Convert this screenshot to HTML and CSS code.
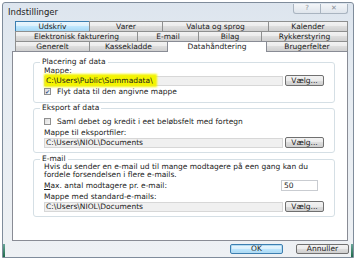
FILE: index.html
```html
<!DOCTYPE html>
<html lang="da">
<head>
    <meta charset="UTF-8">
    <title>Indstillinger</title>
    <link rel="stylesheet" href="styles.css">
</head>
<body>
    <div class="window">
        <div class="titlebar">
            <span class="title">Indstillinger</span>
            <div class="caption-buttons">
                <span class="cap-btn">?</span>
                <span class="cap-btn">&#x2715;</span>
            </div>
        </div>
        <div class="client">
            <div class="tabs">
                <div class="tab-row row-1">
                    <div class="tab hover">Udskriv</div>
                    <div class="tab">Varer</div>
                    <div class="tab">Valuta og sprog</div>
                    <div class="tab">Kalender</div>
                </div>
                <div class="tab-row row-2">
                    <div class="tab">Elektronisk fakturering</div>
                    <div class="tab">E-mail</div>
                    <div class="tab">Bilag</div>
                    <div class="tab">Rykkerstyring</div>
                </div>
                <div class="tab-row row-3">
                    <div class="tab">Generelt</div>
                    <div class="tab">Kassekladde</div>
                    <div class="tab selected">Datahåndtering</div>
                    <div class="tab">Brugerfelter</div>
                </div>
            </div>
            <div class="panel">
                <fieldset class="group group-placering">
                    <legend>Placering af data</legend>
                    <div class="label">Mappe:</div>
                    <div class="path-row">
                        <div class="path"><span class="marker">C:\Users\Public\Summadata\</span></div>
                        <button class="btn">Vælg...</button>
                    </div>
                    <div class="check">
                        <span class="box checked">&#x2714;</span>
                        <span>Flyt data til den angivne mappe</span>
                    </div>
                </fieldset>

                <fieldset class="group group-eksport">
                    <legend>Eksport af data</legend>
                    <div class="check">
                        <span class="box"></span>
                        <span>Saml debet og kredit i eet beløbsfelt med fortegn</span>
                    </div>
                    <div class="label">Mappe til eksportfiler:</div>
                    <div class="path-row">
                        <div class="path">C:\Users\NIOL\Documents</div>
                        <button class="btn">Vælg...</button>
                    </div>
                </fieldset>

                <fieldset class="group group-email">
                    <legend>E-mail</legend>
                    <div class="text">Hvis du sender en e-mail ud til mange modtagere på een gang kan du</div>
                    <div class="text">fordele forsendelsen i flere e-mails.</div>
                    <div class="max-row">
                        <span><u>M</u>ax. antal modtagere pr. e-mail:</span>
                        <div class="number">50</div>
                    </div>
                    <div class="label">Mappe med standard-e-mails:</div>
                    <div class="path-row">
                        <div class="path">C:\Users\NIOL\Documents</div>
                        <button class="btn">Vælg...</button>
                    </div>
                </fieldset>
            </div>
            <div class="footer">
                <button class="btn default">OK</button>
                <button class="btn">Annuller</button>
            </div>
        </div>
    </div>
</body>
</html>
```

FILE: styles.css
```css
body {
    margin: 0;
    background: #ffffff;
    font-family: 'DejaVu Sans', sans-serif;
    font-size: 7.5px;
    color: #1a1a1a;
}
.window {
    position: relative;
    box-sizing: border-box;
    width: 352px;
    height: 256px;
    margin: 2px 0 0 2px;
    border: 1px solid #7f8c9b;
    border-radius: 3px 3px 0 0;
    background: linear-gradient(180deg, #dde5ee 0%, #e6ecf2 30%, #eef1f4 100%);
    display: flex;
    flex-direction: column;
}
/* aero frame glint at the bottom corners */
.window::before,
.window::after {
    content: '';
    position: absolute;
    bottom: 0;
    width: 2px;
    height: 13px;
    background: linear-gradient(180deg, #6aa89a, #1f6b4a);
}
.window::before { left: 0; }
.window::after { right: 0; }

.titlebar {
    height: 18px;
    display: flex;
    align-items: flex-start;
    justify-content: space-between;
    padding: 0 5px 0 5px;
}
.title {
    font-family: 'DejaVu Sans', sans-serif;
    font-size: 8.5px;
    color: #222;
    margin-top: 4px;
}
.caption-buttons {
    display: flex;
    margin-top: 1px;
}
.cap-btn {
    width: 26px;
    height: 9px;
    border: 1px solid #a9b4c0;
    border-top: none;
    background: linear-gradient(180deg, #f3f5f8, #dfe5ec);
    color: #8a8f96;
    font-size: 7px;
    line-height: 9px;
    text-align: center;
}
.cap-btn + .cap-btn {
    border-left: none;
    border-radius: 0 0 3px 0;
}
.cap-btn:first-child {
    border-radius: 0 0 0 3px;
}

.client {
    flex: 1;
    display: flex;
    flex-direction: column;
    padding: 0 5px 0 9px;
}

/* tabs */
.tabs {
    margin-left: 3px;
}
.tab-row {
    display: grid;
    height: 10px;
}
.row-1 { grid-template-columns: 74px 73px 106px 80px; }
.row-2 { grid-template-columns: 122px 61px 63px 87px; }
.row-3 { grid-template-columns: 74px 78px 99px 82px; }
.tab {
    box-sizing: border-box;
    border: 1px solid #8e8f8f;
    border-bottom: none;
    margin-right: -1px;
    background: linear-gradient(180deg, #f2f2f2 0%, #ebebeb 50%, #dddddd 50%, #cfcfcf 100%);
    text-align: center;
    line-height: 9px;
    white-space: nowrap;
}
.tab-row > .tab:last-child { margin-right: 0; }
.tab.hover {
    border-color: #3c7fb1;
    background: linear-gradient(180deg, #eaf6fd 0%, #d9f0fc 50%, #bee6fd 50%, #a7d9f5 100%);
}
.tab.selected {
    position: relative;
    z-index: 1;
    background: #ffffff;
    border-color: #898c95;
    height: 11px;
    margin-bottom: -1px;
}

.panel {
    box-sizing: border-box;
    height: 190px;
    background: #ffffff;
    border: 1px solid #898c95;
    padding: 6px 12px 0 20px;
}

.group {
    margin: 0;
    border: 1px solid #d5dfe5;
    border-radius: 3px;
    padding: 0 10px 4px 10px;
    min-width: 0;
}
.group legend {
    padding: 0 2px;
    margin-left: -4px;
    line-height: 8px;
    color: #1a1a1a;
}
.group-placering { padding-top: 1px; padding-bottom: 7px; }
.group-eksport { margin-top: 1px; padding-top: 4px; }
.group-email { margin-top: 2px; }

.label,
.text {
    line-height: 8px;
    white-space: nowrap;
}
.group-eksport .label { margin-top: 4px; }
.group-email .label { margin-top: 2px; }

.path-row {
    display: flex;
    align-items: center;
    gap: 2px;
    height: 11px;
}
.path {
    box-sizing: border-box;
    flex: 1;
    height: 10px;
    border: 1px solid #d7d7d7;
    background: #f0f0f0;
    line-height: 8px;
    padding-left: 1px;
    white-space: nowrap;
}
.marker {
    background: #f4f400;
    box-shadow: 0 0 2px 2px #f4f400;
    padding-right: 2px;
}

.btn {
    box-sizing: border-box;
    width: 39px;
    height: 11px;
    padding: 0;
    border: 1px solid #707070;
    border-radius: 2px;
    background: linear-gradient(180deg, #f2f2f2 0%, #ebebeb 50%, #dddddd 50%, #cfcfcf 100%);
    font-family: 'DejaVu Sans', sans-serif;
    font-size: 7.5px;
    line-height: 9px;
    color: #1a1a1a;
}

.check {
    display: flex;
    align-items: center;
    gap: 6px;
    height: 8px;
    margin-top: 1px;
    white-space: nowrap;
}
.box {
    box-sizing: border-box;
    width: 7px;
    height: 7px;
    border: 1px solid #8f8f8f;
    background: linear-gradient(135deg, #dcdcdc, #f6f6f6);
    font-size: 6px;
    line-height: 5px;
    text-align: center;
    color: #3d5a8c;
}

.max-row {
    display: flex;
    align-items: center;
    justify-content: space-between;
    height: 11px;
    margin-top: 1px;
    padding-right: 6px;
}
.number {
    box-sizing: border-box;
    width: 37px;
    height: 11px;
    border: 1px solid #c9ccd1;
    background: #ffffff;
    line-height: 9px;
    padding-left: 2px;
}

.footer {
    display: flex;
    justify-content: flex-end;
    gap: 13px;
    margin-top: 3px;
    margin-right: -1px;
}
.footer .btn {
    width: 53px;
    height: 10px;
    line-height: 8px;
}
.footer .btn.default {
    border-color: #3c7fb1;
    box-shadow: inset 0 0 0 1px #b3dcf3;
    background: linear-gradient(180deg, #eaf6fd 0%, #d9f0fc 50%, #bee6fd 50%, #a7d9f5 100%);
}
```
